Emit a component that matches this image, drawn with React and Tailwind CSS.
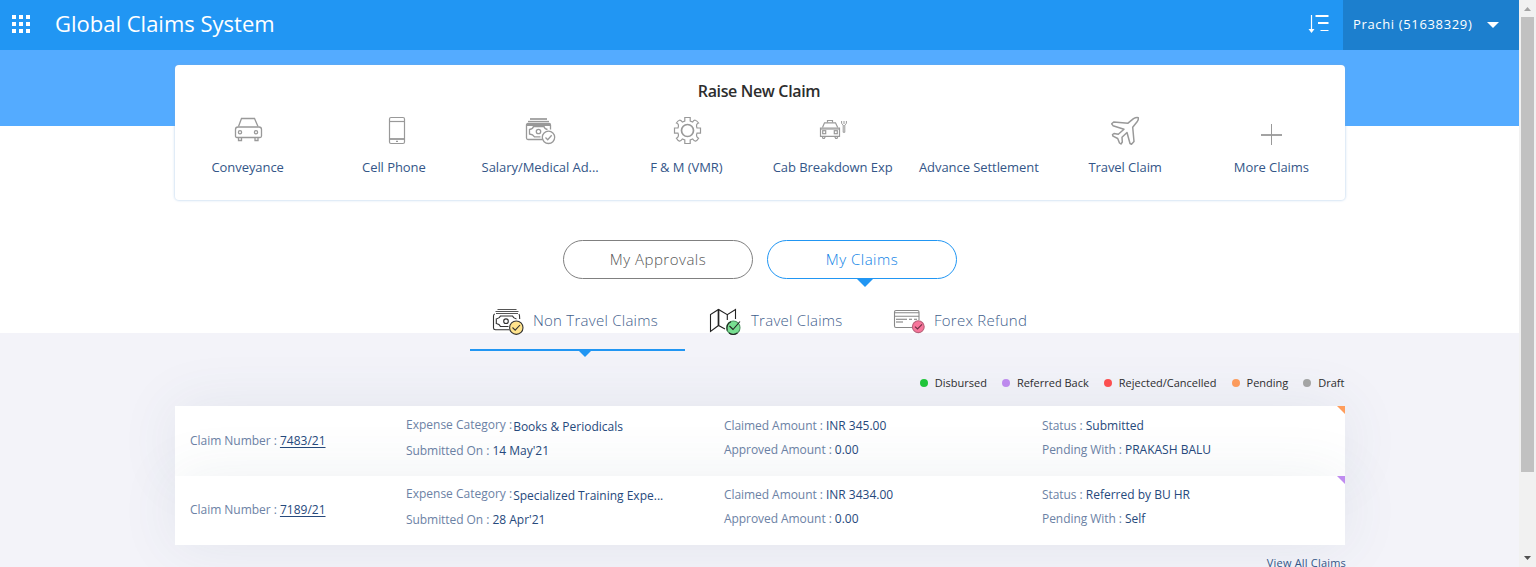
import React from "react";

const gray = "#999999";

function Icon({ children, stroke = gray, w = 1.2 }) {
  return (
    <svg width="40" height="34" viewBox="0 0 40 34" fill="none" stroke={stroke} strokeWidth={w} className="shrink-0">
      {children}
    </svg>
  );
}

const Car = () => (
  <Icon w={1.3}>
    <path d="M10.5 12.5L13.5 4.5H26.5L30 12.5" />
    <path d="M7.5 15.5Q7.5 13 10 13H31Q33.5 13 33.5 15.5V22Q33.5 23.5 32 23.5H9Q7.5 23.5 7.5 22Z" />
    <path d="M10.5 23.5V26.5H13.5V23.5M27 23.5V26.5H30V23.5" />
    <circle cx="12" cy="18.3" r="1.6" />
    <circle cx="28" cy="18.3" r="1.6" />
  </Icon>
);

const Phone = () => (
  <Icon>
    <rect x="15.5" y="3.5" width="15" height="26" rx="1.5" />
    <path d="M15.5 7.5H30.5" />
    <path d="M15.5 25H30.5" strokeWidth="1.8" />
    <path d="M22 27.3H24" />
  </Icon>
);

const Cash = () => (
  <Icon w={1.3}>
    <path d="M9 5H26" strokeWidth="1.7" />
    <path d="M7 7.5H28" />
    <path d="M29.5 15.5V11Q29.5 9.5 28 9.5H7Q5.5 9.5 5.5 11V24Q5.5 25.5 7 25.5H21" />
    <path d="M6 10.8H29" strokeWidth="2.4" />
    <path d="M19.5 22.8H13.5Q12 20.5 8.5 20V15.5Q12 15 12.5 12.5H23Q23.5 15 26.5 15.5" />
    <circle cx="17.5" cy="17.5" r="2.2" />
    <circle cx="27.5" cy="23.3" r="6.2" />
    <path d="M24.5 23.5L26.7 25.7L30.7 21.2" />
  </Icon>
);

const Gear = () => (
  <Icon>
    <circle cx="20.5" cy="16.5" r="6" strokeWidth="1.7" />
    <path d="M17.8 3.5H23.2V7L25.7 8Q28 4 31.6 9Q28.5 10 30 14H33.5V19.2H30Q28.5 22.5 31.6 24.2Q28.5 29.5 25.7 25L23.2 26V29.5H17.8V26L15.3 25Q12.5 29.5 9.4 24.2Q12.5 22.5 11 19.2H7.5V14H11Q12.5 10 9.4 9Q12.5 4 15.3 8L17.8 7Z" />
  </Icon>
);

const Cab = () => (
  <Icon w={1.2}>
    <path d="M14.5 8.5V6.5H19.5V8.5" />
    <path d="M9.5 13.5L11.5 8.8H22.5L24.7 13.5" />
    <path d="M7.5 14H26.5V22.3H7.5Z" />
    <path d="M7.5 15H26.5" />
    <rect x="9.7" y="16.7" width="3" height="3" />
    <rect x="21.3" y="16.7" width="3" height="3" />
    <path d="M9.3 22.5L10 24.5H11.3L12.3 22.5M21.7 22.5L22.7 24.5H24L24.7 22.5" />
    <path d="M28.6 7V9.5L30.2 11V18.3H31.8V11L33.4 9.5V7M31 7V10" strokeWidth="1" />
  </Icon>
);

const Plane = () => (
  <Icon w={1.5}>
    <path
      strokeLinejoin="round"
      d="M32.3 3.7Q32.6 6 31.3 7.5L26.7 13.3L28 27.5L25.5 30.2L24 29.5L21 18.5L16 23.2L16.3 28L15 30L13.5 29L11.7 24.5L7 22.2L6.5 20.5L8 19.5L12.3 20.3L18 15.3L7 11.7L5.7 9.8L7.7 8L22 9.2L27.5 4.7Q30 3.2 32.3 3.7Z"
    />
  </Icon>
);

const Plus = () => (
  <Icon>
    <path d="M19.5 10V31" strokeWidth="1" />
    <path d="M9 21H30" strokeWidth="1.8" />
  </Icon>
);

const claimTypes = [
  ["Conveyance", Car],
  ["Cell Phone", Phone],
  ["Salary/Medical Ad...", Cash],
  ["F & M (VMR)", Gear],
  ["Cab Breakdown Exp", Cab],
  ["Advance Settlement", null],
  ["Travel Claim", Plane],
  ["More Claims", Plus],
];

const legend = [
  ["Disbursed", "bg-[#20c83a]"],
  ["Referred Back", "bg-[#c08cf0]"],
  ["Rejected/Cancelled", "bg-[#ff5050]"],
  ["Pending", "bg-[#ff9d5c]"],
  ["Draft", "bg-[#a6a6a6]"],
];

const claims = [
  {
    number: "7483/21",
    category: "Books & Periodicals",
    submitted: "14 May'21",
    claimed: "INR 345.00",
    approved: "0.00",
    status: "Submitted",
    pending: "PRAKASH BALU",
    tag: "#ff9d5c",
    size: "h-[70px] pt-[7px]",
  },
  {
    number: "7189/21",
    category: "Specialized Training Expe...",
    submitted: "28 Apr'21",
    claimed: "INR 3434.00",
    approved: "0.00",
    status: "Referred by BU HR",
    pending: "Self",
    tag: "#c08cf0",
    size: "h-[69px] pt-1.5",
  },
];

function Field({ label, value }) {
  return (
    <div className="h-6 leading-6 whitespace-pre">
      <span className="tracking-[-0.06px]">{label} : </span>
      <span className="text-[#26497c]">{value}</span>
    </div>
  );
}

function ClaimRow({ claim }) {
  return (
    <div
      className={`relative grid grid-cols-[216px_318px_318px_1fr] bg-white pl-[15px] text-xs text-[#6c82a5] shadow-[0_0_60px_rgba(60,90,110,0.09)] ${claim.size}`}
    >
      <div className="pt-4 leading-6 whitespace-pre">
        <span className="tracking-[-0.03px]">Claim Number : </span>
        <span className="text-[#26497c] underline decoration-1 underline-offset-2">{claim.number}</span>
      </div>
      <div>
        <div className="flex h-[26px] gap-px leading-6">
          <span>Expense Category :</span>
          <span className="pt-[2px] text-[#26497c]">{claim.category}</span>
        </div>
        <Field label="Submitted On" value={claim.submitted} />
      </div>
      <div className="pt-px">
        <Field label="Claimed Amount" value={claim.claimed} />
        <Field label="Approved Amount" value={claim.approved} />
      </div>
      <div className="pt-px">
        <Field label="Status" value={claim.status} />
        <Field label="Pending With" value={claim.pending} />
      </div>
      <svg width="8" height="8" className="absolute top-0 right-0">
        <path d="M0 0H8V8Z" fill={claim.tag} />
      </svg>
    </div>
  );
}

export default function App() {
  return (
    <div className="flex h-[567px] overflow-hidden font-['Open_Sans',sans-serif]">
      <div className="flex h-full w-[1519px] flex-col overflow-hidden bg-[linear-gradient(#54abff_126px,#ffffff_126px,#ffffff_333px,#f3f3f9_333px)]">
        <header className="flex h-[50px] shrink-0 items-center bg-[#2196f3] text-white">
          <svg width="18" height="18" className="mb-0.5 ml-3" fill="white">
            {[0, 7, 14].map((y) => [0, 7, 14].map((x) => <rect key={`${x}-${y}`} x={x} y={y} width="4" height="4" />))}
          </svg>
          <h1 className="ml-[25px] pb-1 text-[22px] leading-8">Global Claims System</h1>
          <svg width="22" height="20" viewBox="0 0 22 20" className="mr-[13px] mb-0.5 ml-auto" fill="none" stroke="white">
            <path d="M3.5 1V17" strokeWidth="1.2" />
            <path d="M0.5 15H6.5L3.5 19Z" fill="white" stroke="none" />
            <path d="M7.5 2H20.5M10 9H20.5" strokeWidth="2" />
            <path d="M12.5 16.5H20.5" strokeWidth="1" />
          </svg>
          <div className="flex h-full w-[176px] items-center bg-[#1c7fce] pl-2.5 text-[13px] tracking-[0.65px] whitespace-nowrap">
            <span className="w-[134px]">Prachi (51638329)</span>
            <svg width="12" height="6">
              <path d="M0 0H12L6 6Z" fill="white" />
            </svg>
          </div>
        </header>

        <main className="ml-[175px] flex w-[1170px] flex-1 flex-col pt-[15px]">
          <section className="h-[135px] shrink-0 rounded bg-white pt-3.5 shadow-[0_0_2px_1px_rgba(120,170,220,0.3)]">
            <h2 className="pr-[2px] text-center text-[16px] leading-6 font-semibold tracking-[-0.35px] text-[#2d2d2d]">Raise New Claim</h2>
            <div className="mt-[11px] grid grid-cols-8">
              {claimTypes.map(([name, Glyph]) => (
                <div key={name} className="flex flex-col items-center">
                  <div className="h-[43px]">{Glyph && <Glyph />}</div>
                  <span className="pr-px text-[13px] leading-5 tracking-[-0.06px] whitespace-nowrap text-[#345688]">{name}</span>
                </div>
              ))}
            </div>
          </section>

          <div className="mt-10 flex shrink-0 justify-center gap-3.5 text-[15px] font-light tracking-[0.5px]">
            <button className="h-[39px] w-[190px] rounded-full border border-[#808080] text-[#555555]">My Approvals</button>
            <button className="relative h-[39px] w-[190px] rounded-full border border-[#2196f3] text-[#0a7fe6]">
              My Claims
              <svg width="16" height="8" className="absolute top-[38px] left-[89px]">
                <path d="M0 0H16L8 8Z" fill="#2196f3" />
              </svg>
            </button>
          </div>

          <nav className="mt-[22px] ml-[295px] flex h-[50px] shrink-0 text-[15px] leading-[38px] font-light tracking-[0.25px] whitespace-nowrap text-[#3f5e8c]">
            <div className="relative flex w-[215px] gap-[3px] border-b-2 border-[#2196f3] pl-5">
              <svg width="40" height="38" viewBox="490 301 40 38" fill="none" stroke="#333333" strokeWidth="1.1">
                <path d="M497.5 309.5H516.5M495.5 311.5H518.5M496 313.5H518" stroke="#555555" />
                <path d="M495 314Q493.5 314 493.5 316V328Q493.5 329.7 495.5 329.7H509.5M519 314Q519.7 315 519.7 319" />
                <path d="M508.5 326.5H500.5Q499.5 324 496.3 323.5V319Q499.5 318.5 500.5 316H512.5Q513.5 318.5 516.5 319" />
                <circle cx="506" cy="321.2" r="2.3" />
                <circle cx="516.3" cy="327.7" r="6.7" fill="#ffe38c" />
                <path d="M512.5 327.5L515.2 330.2L520 325" />
              </svg>
              <span>Non Travel Claims</span>
              <svg width="12" height="6" className="absolute top-[50px] left-[109px]">
                <path d="M0 0H12L6 6Z" fill="#2196f3" />
              </svg>
            </div>
            <div className="flex w-[207px] gap-[3px] pl-[23px]">
              <svg width="40" height="38" viewBox="708 301 40 38" fill="none" stroke="#222222" strokeWidth="1.1">
                <path d="M725 329L718.5 325.5L710.5 331.5V314.5L718.5 309.5L727.3 314.7L735.5 309.5V319M727.3 314.7V320" />
                <path d="M718.5 309.5V325.5" strokeWidth="1.7" />
                <circle cx="733.3" cy="327.7" r="6.7" fill="#78df91" stroke="#4d9360" />
                <path d="M727.2 330.5Q726 324 731 321.7M729.5 326L733 329.5L740 321.5M729 333Q733 336 737.5 333" />
              </svg>
              <span>Travel Claims</span>
            </div>
            <div className="flex gap-[2px]">
              <svg width="40" height="38" viewBox="892 301 40 38" fill="none" stroke="#888888" strokeWidth="1.1">
                <path d="M912 327.5H896Q894.5 327.5 894.5 326V312Q894.5 310.5 896 310.5H917.5Q919 310.5 919 312V320" />
                <path d="M894.5 312.7H919M894.5 316.3H919" />
                <path d="M896 319.3H907M909 319.3H912M914 319.3H917M896 322H903" stroke="#777777" />
                <circle cx="918.3" cy="326.7" r="5.9" fill="#f8759b" stroke="#b86079" />
                <path d="M915 326.7L917.5 329L922 324.3" stroke="#703044" />
              </svg>
              <span>Forex Refund</span>
            </div>
          </nav>

          <div className="mt-[22px] flex h-5 shrink-0 justify-end gap-[15px] pr-[0.5px] text-[11px] leading-5 text-[#2e2e2e]">
            {legend.map(([name, color]) => (
              <div key={name} className="flex items-center gap-[7px]">
                <i className={`size-2 rounded-full ${color}`} />
                <span>{name}</span>
              </div>
            ))}
          </div>

          <section className="mt-[13px] shrink-0">
            {claims.map((claim) => (
              <ClaimRow key={claim.number} claim={claim} />
            ))}
          </section>
          <div className="relative mt-2 -mr-px shrink-0 text-right text-[11px] leading-5 tracking-[0.19px] text-[#345688]">View All Claims</div>
        </main>
      </div>

      <aside className="flex h-full w-[17px] flex-col items-center bg-[#f1f1f1]">
        <svg width="17" height="17">
          <path d="M5 11L8.5 7L12 11Z" fill="#a3a3a3" />
        </svg>
        <div className="h-[455px] w-[13px] bg-[#c1c1c1]" />
        <svg width="17" height="17" className="mt-auto">
          <path d="M5 6L8.5 10L12 6Z" fill="#505050" />
        </svg>
      </aside>
    </div>
  );
}
